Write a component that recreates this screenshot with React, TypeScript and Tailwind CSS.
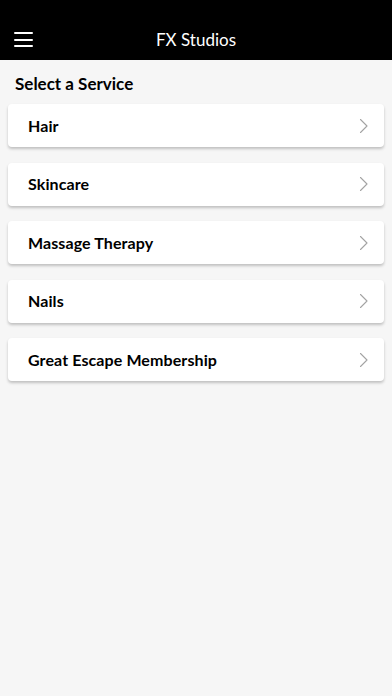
const services = ['Hair', 'Skincare', 'Massage Therapy', 'Nails', 'Great Escape Membership'];

function Chevron() {
  return (
    <svg width="10" height="16" viewBox="0 0 10 16" fill="none" className="shrink-0">
      <path d="M1.5 1.5 L8 8 L1.5 14.5" stroke="#a3a3a3" strokeWidth="1.1" strokeLinecap="round" strokeLinejoin="round" />
    </svg>
  );
}

export default function App() {
  return (
    <div className="min-h-[696px] w-full bg-[#f6f6f6] font-['Lato','Noto_Sans',sans-serif] text-black">
      <div className="h-[60px] bg-black flex items-end pb-[10px] relative">
        <button className="absolute left-[14px] bottom-[13px] flex flex-col gap-[4.5px]">
          <span className="block w-[19px] h-[2px] bg-white rounded" />
          <span className="block w-[19px] h-[2px] bg-white rounded" />
          <span className="block w-[19px] h-[2px] bg-white rounded" />
        </button>
        <h1 className="w-full text-center text-white text-[17px] leading-[20px]">FX Studios</h1>
      </div>
      <div className="px-2">
        <h2 className="pl-[7px] pt-[13px] pb-[9px] text-[17px] leading-[22px] font-bold">Select a Service</h2>
        <div className="flex flex-col gap-[15.6px]">
          {services.map((s) => (
            <div
              key={s}
              className="h-[43px] bg-white rounded-[4px] shadow-[0_2px_3px_rgba(0,0,0,0.22)] flex items-center justify-between pl-5 pr-[15px]"
            >
              <span className="text-[16px] font-bold tracking-[0.1px]">{s}</span>
              <Chevron />
            </div>
          ))}
        </div>
      </div>
    </div>
  );
}
